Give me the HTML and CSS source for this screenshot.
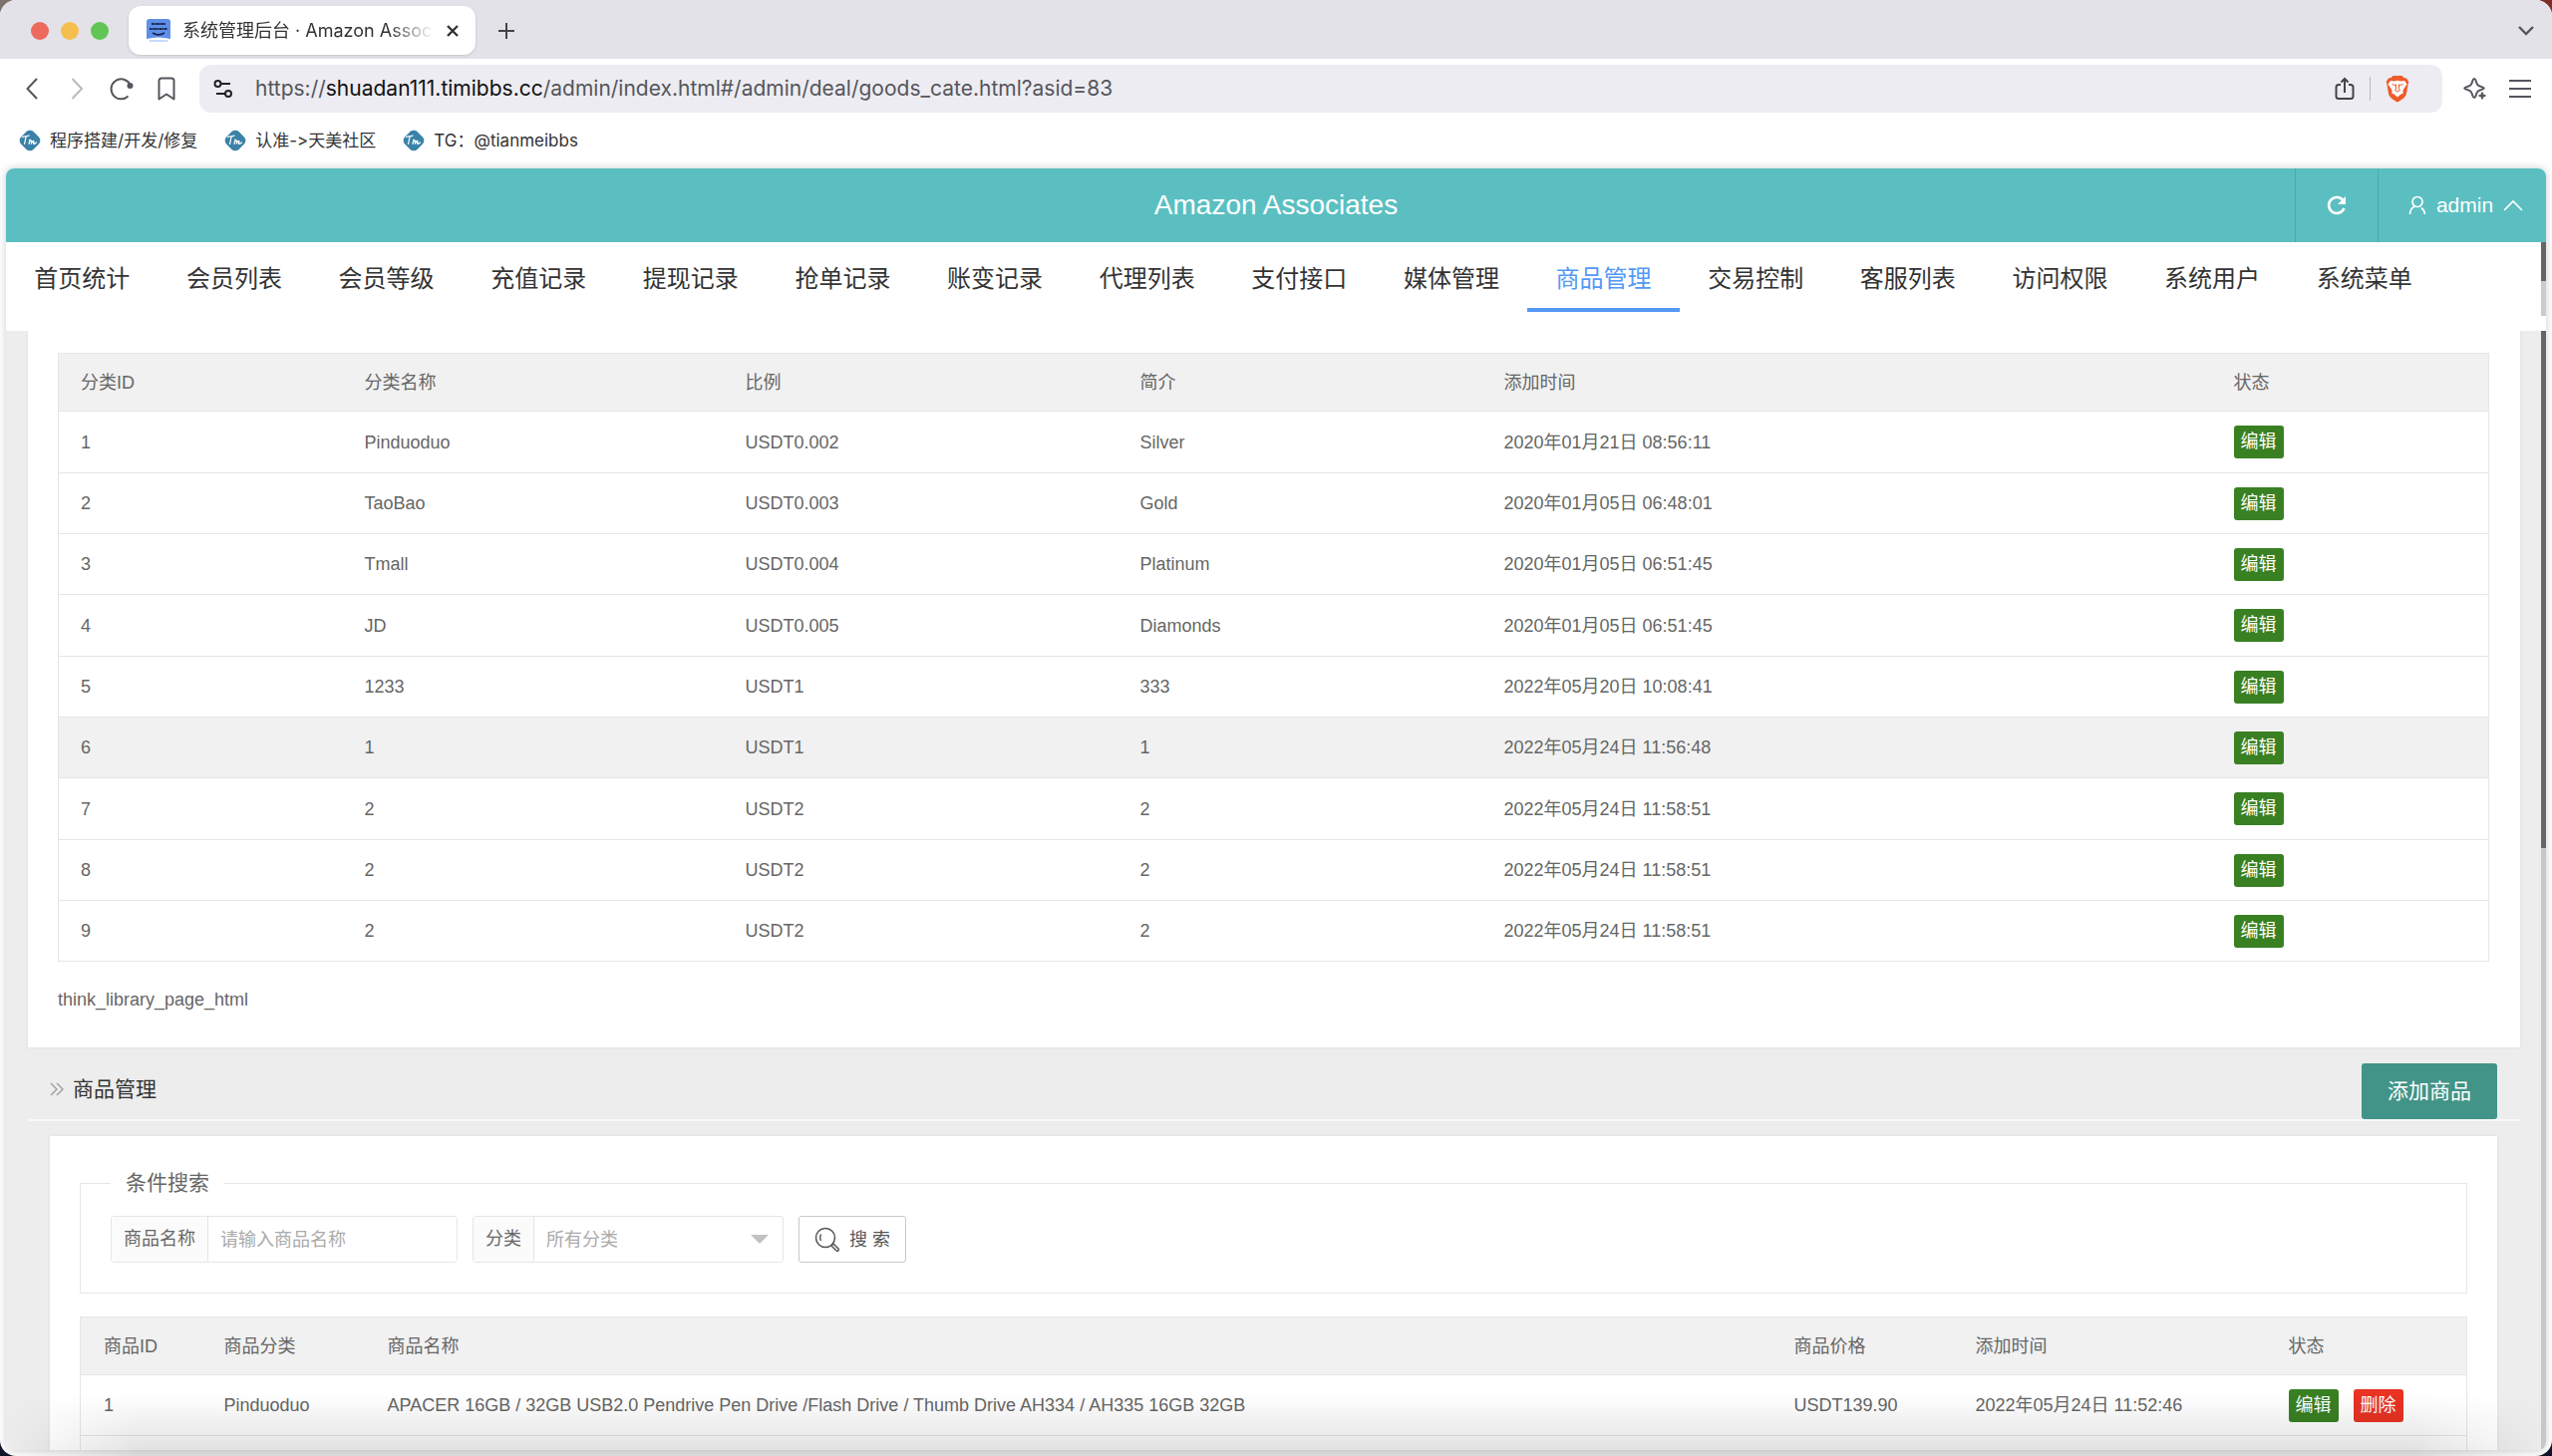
FILE: index.html
```html
<!DOCTYPE html>
<html lang="zh-CN">
<head>
<meta charset="utf-8">
<title>系统管理后台 · Amazon Associates</title>
<link rel="stylesheet" href="styles.css">
</head>
<body>
<svg class="defs" width="0" height="0" aria-hidden="true">
  <symbol id="tm" viewBox="0 0 24 24">
    <rect x="3.200" y="3.200" width="17.600" height="17.600" rx="5" transform="rotate(45 12 12)" fill="#3b82a8"/>
    <path d="M4.500 8.500c2-1.500 4 0 6.500-1.500M8 8c-.5 3-.8 5-1.500 7.500M12 11l-1 4.500M11.500 13.500c.8-1.500 2.200-2 2.200-1l-.5 3c.8-2.500 2.800-4 2.800-2.500l-.5 2c.3 1 1.500 0 3-1" fill="none" stroke="#fff" stroke-width="1.200" stroke-linecap="round"/>
  </symbol>
</svg>
<div class="window">
  <header class="tabstrip">
    <div class="lights"><span class="light red"></span><span class="light amber"></span><span class="light green"></span></div>
    <div class="tab">
      <svg class="favicon" viewBox="0 0 24 24"><path d="M0 3a3 3 0 0 1 3-3h18a3 3 0 0 1 3 3v17q-12-3-24 0z" fill="#5f8fe9"/><path d="M5 5h14M3 10h18" stroke="#14264f" stroke-width="2" stroke-dasharray="2 .5"/><path d="M6 14c4 2.500 8 2.500 12 0" fill="none" stroke="#14264f" stroke-width="1.500"/><path d="M3 22h18" stroke="#9bb9f3" stroke-width="1.500" stroke-dasharray="1.500 .6"/></svg>
      <span class="tab-title">系统管理后台 · Amazon Associates</span>
      <button class="icon-btn" aria-label="关闭标签页"><svg width="14" height="14" viewBox="0 0 14 14"><path d="M2 2l10 10M12 2L2 12" stroke="#333" stroke-width="2.400"/></svg></button>
    </div>
    <button class="icon-btn new-tab" aria-label="新标签页"><svg width="16" height="16" viewBox="0 0 16 16"><path d="M8 0v16M0 8h16" stroke="#444" stroke-width="2"/></svg></button>
    <button class="icon-btn tab-search" aria-label="搜索标签页"><svg width="16" height="16" viewBox="0 0 16 16"><path d="M1 4l7 7 7-7" fill="none" stroke="#55565c" stroke-width="2.400"/></svg></button>
  </header>
  <div class="toolbar">
    <div class="nav-icons">
      <button class="icon-btn" aria-label="后退"><svg width="24" height="24" viewBox="0 0 24 24"><path d="M17 2L7.500 12 17 22" fill="none" stroke="#55565c" stroke-width="2"/></svg></button>
      <button class="icon-btn" aria-label="前进"><svg width="24" height="24" viewBox="0 0 24 24"><path d="M7.500 2L17 12 7.500 22" fill="none" stroke="#b9babd" stroke-width="2"/></svg></button>
      <button class="icon-btn" aria-label="刷新"><svg width="24" height="24" viewBox="0 0 24 24"><path d="M20 7A10 10 0 1 0 18.500 19.500" fill="none" stroke="#55565c" stroke-width="2"/><circle cx="20.500" cy="9" r="3" fill="#55565c"/></svg></button>
      <button class="icon-btn" aria-label="书签"><svg width="24" height="24" viewBox="0 0 24 24"><path d="M4.500 4a2.500 2.500 0 0 1 2.500-2.500h10A2.500 2.500 0 0 1 19.500 4v18.500L12 17.500l-7.500 5z" fill="none" stroke="#55565c" stroke-width="2" stroke-linejoin="round"/></svg></button>
    </div>
    <div class="urlbar">
      <svg width="20" height="20" viewBox="0 0 20 20" fill="none" stroke="#222" stroke-width="2"><circle cx="4.500" cy="5" r="3"/><path d="M8 5h9M3 15h9"/><circle cx="15" cy="15" r="3"/></svg>
      <div class="url">https://<b>shuadan111.timibbs.cc</b>/admin/index.html#/admin/deal/goods_cate.html?asid=83</div>
      <button class="icon-btn" aria-label="分享"><svg width="20" height="24" viewBox="0 0 20 24" fill="none" stroke="#444" stroke-width="2"><path d="M6 8H4a2.500 2.500 0 0 0-2.500 2.500v9A2.500 2.500 0 0 0 4 22h12a2.500 2.500 0 0 0 2.500-2.500v-9A2.500 2.500 0 0 0 16 8h-2M10 16V2M6.500 5.500L10 2l3.500 3.500"/></svg></button>
      <span class="sep"></span>
      <button class="icon-btn" aria-label="Brave 防护"><svg width="24" height="28" viewBox="0 0 24 28"><path d="M7.500 1h9l2 2L21 3.500 23.300 7l-.8 3L21 19c-.6 3.500-5 6.500-9 8.500C8 25.500 3.600 22.500 3 19L1.500 10 .7 7 3 3.500 5.500 3z" fill="#ef5b2b"/><path d="M5 6l3.500.5L12 5.700l3.500.8L19 6l2.500 3.500-3.500 5-.7 2.500.7 1.500-2.500 1-3.500 3-3.500-3-2.500-1 .7-1.500-.7-2.500-3.500-5z" fill="#fff"/><path d="M6.500 9.500l3.500 1M17.500 9.500l-3.500 1M10.500 9.500v4.500L9.500 15.500l2.500 1.500 2.500-1.500-1-1.500V9.500" stroke="#ef5b2b" stroke-width="1" fill="none"/></svg></button>
    </div>
    <button class="icon-btn" aria-label="Leo"><svg width="24" height="24" viewBox="0 0 24 24"><path d="M11 2c.8 0 1.300.8 1.700 2.200C13.700 8 14.500 9 18 10c1.600.5 2.800.8 2.800 1.500S19.600 12.500 18 13c-3.500 1-4.300 2-5.300 5.800C12.300 20.200 11.800 21 11 21s-1.300-.8-1.700-2.200C8.300 15 7.500 14 4 13c-1.600-.5-2.800-.8-2.800-1.500S2.400 10.500 4 10c3.500-1 4.300-2 5.300-5.800C9.700 2.800 10.200 2 11 2z" fill="none" stroke="#55565c" stroke-width="2"/><path d="M19 15v8M15 19h8" stroke="#fff" stroke-width="5"/><path d="M19 15.500l1 2.500 2.500 1-2.500 1-1 2.500-1-2.500-2.500-1 2.500-1z" fill="#55565c" stroke="#55565c"/></svg></button>
    <button class="icon-btn" aria-label="菜单"><svg width="24" height="24" viewBox="0 0 24 24"><path d="M1 4h22M1 12h22M1 20h22" stroke="#55565c" stroke-width="2"/></svg></button>
  </div>
  <nav class="bookmarks">
    <a href="#"><svg width="24" height="24"><use href="#tm"/></svg>程序搭建/开发/修复</a>
    <a href="#"><svg width="24" height="24"><use href="#tm"/></svg>认准-&gt;天美社区</a>
    <a href="#"><svg width="24" height="24"><use href="#tm"/></svg>TG：@tianmeibbs</a>
  </nav>
  <div class="page">
    <header class="app-header">
      <h1>Amazon Associates</h1>
      <div class="app-actions">
        <button class="reload" aria-label="刷新页面"><svg width="20" height="20" viewBox="0 0 20 20"><path d="M16 4.500A8 8 0 1 0 17.500 13" fill="none" stroke="#fff" stroke-width="2.600"/><path d="M19 1v8h-8z" fill="#fff"/></svg></button>
        <button class="user"><svg width="18" height="20" viewBox="0 0 18 20" fill="none" stroke="#fff" stroke-width="1.700"><circle cx="9" cy="6.500" r="5"/><path d="M1.500 19c0-4 1.800-6.500 5-8M13 12.500c2 1.500 3.200 3.500 3.500 6.500"/></svg>admin<svg width="20" height="12" viewBox="0 0 20 12"><path d="M1 11l9-9 9 9" fill="none" stroke="#fff" stroke-width="1.600"/></svg></button>
      </div>
    </header>
    <nav class="menu">
      <a href="#">首页统计</a><a href="#">会员列表</a><a href="#">会员等级</a><a href="#">充值记录</a><a href="#">提现记录</a><a href="#">抢单记录</a><a href="#">账变记录</a><a href="#">代理列表</a><a href="#">支付接口</a><a href="#">媒体管理</a><a href="#" class="active">商品管理</a><a href="#">交易控制</a><a href="#">客服列表</a><a href="#">访问权限</a><a href="#">系统用户</a><a href="#">系统菜单</a>
      <span class="menu-scroll"></span>
    </nav>
    <main class="content">
      <section class="card">
        <table class="grid cates">
          <colgroup><col class="c1"><col class="c2"><col class="c3"><col class="c4"><col class="c5"><col></colgroup>
          <thead><tr><th>分类ID</th><th>分类名称</th><th>比例</th><th>简介</th><th>添加时间</th><th>状态</th></tr></thead>
          <tbody>
            <tr><td>1</td><td>Pinduoduo</td><td>USDT0.002</td><td>Silver</td><td>2020年01月21日 08:56:11</td><td><button class="tag">编辑</button></td></tr>
            <tr><td>2</td><td>TaoBao</td><td>USDT0.003</td><td>Gold</td><td>2020年01月05日 06:48:01</td><td><button class="tag">编辑</button></td></tr>
            <tr><td>3</td><td>Tmall</td><td>USDT0.004</td><td>Platinum</td><td>2020年01月05日 06:51:45</td><td><button class="tag">编辑</button></td></tr>
            <tr><td>4</td><td>JD</td><td>USDT0.005</td><td>Diamonds</td><td>2020年01月05日 06:51:45</td><td><button class="tag">编辑</button></td></tr>
            <tr><td>5</td><td>1233</td><td>USDT1</td><td>333</td><td>2022年05月20日 10:08:41</td><td><button class="tag">编辑</button></td></tr>
            <tr class="hover"><td>6</td><td>1</td><td>USDT1</td><td>1</td><td>2022年05月24日 11:56:48</td><td><button class="tag">编辑</button></td></tr>
            <tr><td>7</td><td>2</td><td>USDT2</td><td>2</td><td>2022年05月24日 11:58:51</td><td><button class="tag">编辑</button></td></tr>
            <tr><td>8</td><td>2</td><td>USDT2</td><td>2</td><td>2022年05月24日 11:58:51</td><td><button class="tag">编辑</button></td></tr>
            <tr><td>9</td><td>2</td><td>USDT2</td><td>2</td><td>2022年05月24日 11:58:51</td><td><button class="tag">编辑</button></td></tr>
          </tbody>
        </table>
        <p class="pager">think_library_page_html</p>
      </section>
      <div class="section-head">
        <svg width="14" height="14" viewBox="0 0 14 14"><path d="M1 1l6 6-6 6M7 1l6 6-6 6" fill="none" stroke="#999" stroke-width="1.300"/></svg>
        <h2>商品管理</h2>
        <button class="add">添加商品</button>
      </div>
      <section class="card inner">
        <fieldset class="search">
          <legend>条件搜索</legend>
          <form class="filters">
            <div class="field"><label for="name">商品名称</label><input id="name" type="text" placeholder="请输入商品名称"></div>
            <div class="field"><label for="cate">分类</label><select id="cate"><option>所有分类</option></select></div>
            <button class="find" type="button"><svg width="26" height="26" viewBox="0 0 26 26" fill="none" stroke="#555" stroke-width="1.500"><circle cx="11" cy="11" r="9.500"/><path d="M6.500 7.500c-1 2-1 4.500 0 6.500M17 19l2-2 5 5c1 1.500-.5 3-2 2z"/></svg>搜 索</button>
          </form>
        </fieldset>
        <table class="grid goods">
          <colgroup><col class="g1"><col class="g2"><col class="g3"><col class="g4"><col class="g5"><col></colgroup>
          <thead><tr><th>商品ID</th><th>商品分类</th><th>商品名称</th><th>商品价格</th><th>添加时间</th><th>状态</th></tr></thead>
          <tbody>
            <tr><td>1</td><td>Pinduoduo</td><td>APACER 16GB / 32GB USB2.0 Pendrive Pen Drive /Flash Drive / Thumb Drive AH334 / AH335 16GB 32GB</td><td>USDT139.90</td><td>2022年05月24日 11:52:46</td><td><button class="tag">编辑</button><button class="tag del">删除</button></td></tr>
            <tr><td></td><td></td><td></td><td></td><td></td><td></td></tr>
          </tbody>
        </table>
      </section>
      <span class="page-scroll"></span>
    </main>
  </div>
  <div class="shade"></div>
</div>
</body>
</html>
```
FILE: styles.css
```css
* { box-sizing: border-box; }

html { background: linear-gradient(90deg, #7d716c 50%, #7c2f28 50%) 0 0 / 100% 50% no-repeat #10162a; }

body {
  margin: 0;
  font-family: "Liberation Sans", "Noto Sans CJK SC", sans-serif;
  font-size: 18px;
  line-height: 30px;
  color: #666;
}

button { font: inherit; border: 0; padding: 0; cursor: pointer; }
a { color: inherit; text-decoration: none; }
h1, h2, p { margin: 0; font-weight: 400; }
svg { flex: none; display: block; }
.defs { position: absolute; }

.window {
  position: relative;
  height: 100vh;
  display: flex;
  flex-direction: column;
  border-radius: 16px;
  overflow: hidden;
  background: #fff;
}

.icon-btn { display: flex; background: none; }

/* Browser chrome */
.tabstrip {
  display: flex;
  align-items: center;
  height: 59px;
  padding: 2px 18px 0 31px;
  background: #e3e2e8;
}
.lights { display: flex; gap: 12px; margin-right: 20px; }
.light { width: 18px; height: 18px; border-radius: 50%; }
.red { background: #ed6a5e; }
.amber { background: #f5bf4f; }
.green { background: #61c554; }
.tab {
  display: flex;
  align-items: center;
  width: 348px;
  height: 49px;
  padding: 0 16px 0 18px;
  gap: 12px;
  border-radius: 12px;
  background: #fff;
  box-shadow: 0 1px 3px #0002;
}
.favicon { width: 24px; height: 24px; }
.tab-title {
  flex: 1;
  overflow: hidden;
  white-space: nowrap;
  font-family: Inter, "Noto Sans CJK SC", sans-serif;
  color: #333;
  -webkit-mask-image: linear-gradient(90deg, #000 82%, transparent);
  mask-image: linear-gradient(90deg, #000 82%, transparent);
}
.new-tab { margin-left: 23px; }
.tab-search { margin-left: auto; }

.toolbar {
  display: flex;
  align-items: center;
  height: 60px;
  padding: 0 20px;
  gap: 21px;
}
.nav-icons { display: flex; gap: 21px; }
.urlbar {
  flex: 1;
  display: flex;
  align-items: center;
  height: 48px;
  padding: 0 33px 0 14px;
  gap: 15px;
  border-radius: 12px;
  background: #edecf2;
}
.url {
  flex: 1;
  margin-left: 7px;
  font-family: Inter, sans-serif;
  font-size: 21px;
  color: #55565c;
}
.url b { font-weight: 400; color: #111; }
.sep { width: 1px; height: 24px; background: #bbb; }

.bookmarks {
  display: flex;
  align-items: center;
  height: 50px;
  padding: 0 18px 7px;
  gap: 26px;
  font-family: Inter, "Noto Sans CJK SC", sans-serif;
  font-size: 17px;
  font-feature-settings: "calt" 0;
  color: #333;
}
.bookmarks a { display: flex; align-items: center; gap: 8px; }

/* Admin page */
.page {
  flex: 1;
  min-height: 0;
  display: flex;
  flex-direction: column;
  margin: 0 6px 6px;
  border-radius: 8px;
  overflow: hidden;
  box-shadow: 0 0 8px #0003;
}
.app-header {
  flex: none;
  display: grid;
  grid-template-columns: 1fr auto 1fr;
  align-items: center;
  height: 74px;
  background: #5bbfc1;
  color: #fff;
}
.app-header h1 { grid-column: 2; font-size: 28px; }
.app-actions { display: flex; justify-content: flex-end; height: 100%; }
.app-actions button {
  display: flex;
  align-items: center;
  justify-content: center;
  gap: 10px;
  border-left: 1px solid #4ea8ab;
  background: none;
  color: #fff;
  font-size: 21px;
}
.reload { width: 83px; }
.app-actions .user { width: 169px; padding-left: 7px; }

.menu {
  position: relative;
  flex: none;
  display: flex;
  height: 89px;
  padding-right: 106px;
  background: #fff;
  font-size: 24px;
  color: #333;
}
.menu a { flex: 1; height: 70px; line-height: 73px; text-align: center; white-space: nowrap; }
.menu .active { color: #5399f5; border-bottom: 4px solid #5399f5; }
.menu-scroll {
  position: absolute;
  right: 0;
  top: 0;
  width: 5px;
  height: 74px;
  background: linear-gradient(#666 39px, #ccc 39px);
}

.content {
  position: relative;
  flex: 1;
  min-height: 0;
  overflow: hidden;
  padding: 0 26px 0 22px;
  background: #ededed;
}
.page-scroll {
  position: absolute;
  right: 0;
  top: 0;
  bottom: 0;
  width: 5px;
  background: linear-gradient(#666 519px, #c8c8c8 519px);
}
.card { padding: 22px 31px 0 30px; background: #fff; box-shadow: 0 0 4px #0001; }
.inner { margin: 15px 23px 0 22px; padding: 33px 30px 60px; }

.grid { width: 100%; border-collapse: collapse; table-layout: fixed; border: 1px solid #e6e6e6; }
.grid th, .grid td {
  padding: 0 0 0 22px;
  text-align: left;
  font-weight: 400;
  white-space: nowrap;
  border-bottom: 1px solid #e6e6e6;
}
.goods th, .goods td { padding-left: 23px; }
.grid th { height: 58px; background: #f1f1f1; }
.grid td { height: 61px; }
.cates tr:nth-child(3n + 1) td { height: 62px; }
.grid .hover { background: #f1f1f1; }
.c1 { width: 285px; }
.c2 { width: 382px; }
.c3 { width: 396px; }
.c4 { width: 365px; }
.c5 { width: 732px; }
.g1 { width: 121px; }
.g2 { width: 164px; }
.g3 { width: 1411px; }
.g4 { width: 182px; }
.g5 { width: 314px; }

.tag {
  width: 50px;
  height: 33px;
  border-radius: 3px;
  background: #398023;
  color: #fff;
  line-height: 33px;
  vertical-align: middle;
}
.tag + .tag { margin-left: 15px; }
.tag.del { background: #e93323; }

.pager { height: 86px; line-height: 77px; }

.section-head {
  display: flex;
  align-items: center;
  height: 74px;
  padding: 11px 23px 0 22px;
  gap: 9px;
  border-bottom: 2px solid #f8f8f8;
}
.section-head h2 { font-size: 21px; color: #333; }
.add {
  align-self: flex-end;
  width: 136px;
  height: 56px;
  margin-left: auto;
  border-radius: 3px;
  background: #429488;
  color: #fff;
  font-size: 21px;
}

.search {
  min-width: 0;
  margin: 0 0 23px;
  padding: 19px 30px 30px;
  border: 1px solid #e6e6e6;
}
.search legend { padding: 0 15px; font-size: 21px; line-height: 28px; }
.filters { display: flex; gap: 15px; }
.field { display: flex; height: 47px; border: 1px solid #e6e6e6; border-radius: 3px; }
.field label { padding: 0 12px; line-height: 45px; background: #fbfbfb; border-right: 1px solid #e6e6e6; }
.field input, .field select {
  width: 249px;
  padding: 0 12px;
  border: 0;
  background: #fff;
  font: inherit;
  color: #aaa;
}
.field input::placeholder { color: #aaa; }
.field select {
  appearance: none;
  background: url("data:image/svg+xml,%3Csvg xmlns='http://www.w3.org/2000/svg' width='18' height='9'%3E%3Cpath d='M0 0h18l-9 9z' fill='%23c2c2c2'/%3E%3C/svg%3E") no-repeat right 14px center;
}
.find {
  display: flex;
  align-items: center;
  justify-content: center;
  width: 108px;
  height: 47px;
  gap: 9px;
  border: 1px solid #c9c9c9;
  border-radius: 3px;
  background: #fff;
  color: #555;
}

/* Soft darkening along the window's lower edge */
.shade {
  position: absolute;
  left: 0;
  right: 0;
  bottom: 0;
  height: 62px;
  background: linear-gradient(#0000, #00000020);
  -webkit-mask-image: linear-gradient(90deg, transparent, #000 140px, #000 calc(100% - 140px), transparent);
  mask-image: linear-gradient(90deg, transparent, #000 140px, #000 calc(100% - 140px), transparent);
  pointer-events: none;
}
```
